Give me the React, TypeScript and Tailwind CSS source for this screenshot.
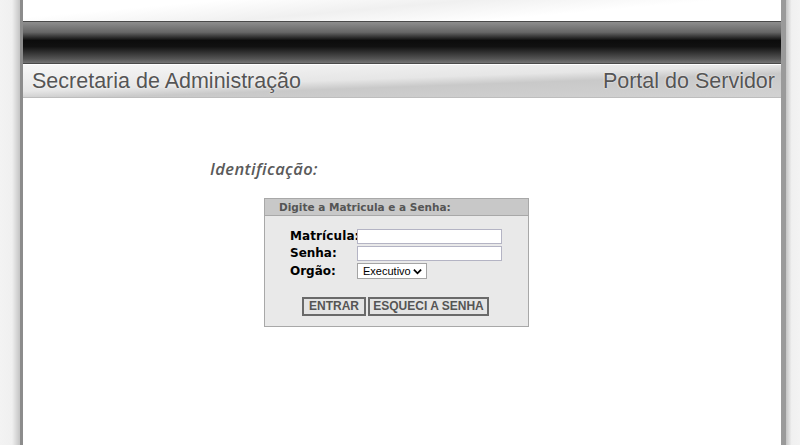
import React from 'react';

const App = () => {
  return (
    <div className="flex h-[445px] w-[800px] overflow-hidden bg-white font-['Liberation_Sans',Arial,sans-serif]">
      {/* left gutter */}
      <div className="w-[20px] shrink-0 bg-[linear-gradient(to_right,#f3f3f3_0%,#f0f0f0_60%,#c4c4c4_100%)]" />
      <div className="w-[3px] shrink-0 bg-[#8c8c8c]" />

      <main className="flex flex-1 flex-col">
        {/* top strip */}
        <div className="h-[21px] bg-[linear-gradient(175deg,#ffffff_20%,#f0f0f0_45%,#ffffff_70%)]" />
        {/* black band */}
        <div className="h-[43px] border-t border-b border-[#4a4a4a] bg-[linear-gradient(to_bottom,#8e8e8e_0%,#666_25%,#0c0c0c_45%,#111_60%,#555_90%,#747474_100%)]" />
        <div className="h-px bg-white" />
        {/* sub header */}
        <div className="flex h-[33px] items-center justify-between border-b border-[#bdbdbd] bg-[linear-gradient(178deg,#f7f7f7_0%,#e6e6e6_45%,#c9c9c9_60%,#d2d2d2_100%)] pl-[9px] pr-[6px]">
          <span className="text-[21.5px] text-[#555] [text-shadow:0_0_2px_#fff]">Secretaria de Administração</span>
          <span className="text-[21.5px] text-[#555] [text-shadow:0_0_2px_#fff]">Portal do Servidor</span>
        </div>

        {/* content */}
        <div className="flex flex-col pl-[187px] pt-[61px]">
          <h1 className="font-['Open_Sans',sans-serif] text-[16.5px] font-semibold italic leading-[20px] tracking-[0.4px] text-[#5a5a5a]">
            Identificação:
          </h1>

          <div className="ml-[54px] mt-[19px] w-[265px] border border-[#a8a8a8] bg-[#e9e9e9]">
            <div className="h-[17px] border-b border-[#a8a8a8] bg-[#c8c8c8] pl-[14px] font-['DejaVu_Sans',Verdana,sans-serif] text-[10.5px] font-bold leading-[16px] text-[#555]">
              Digite a Matricula e a Senha:
            </div>

            <div className="pl-[25px] pt-[13px]">
              <div className="grid grid-cols-[67px_auto] items-center gap-y-[2px] whitespace-nowrap font-['DejaVu_Sans',Verdana,sans-serif] text-[12px] font-bold leading-[15px] text-black">
                <label className="tracking-[0.1px]">Matrícula:</label>
                <input className="h-[15px] w-[145px] border border-[#b4b4c4] bg-white" />
                <label>Senha:</label>
                <input type="password" className="h-[15px] w-[145px] border border-[#b4b4c4] bg-white" />
                <label>Orgão:</label>
                <div className="flex h-[16px] w-[70px] items-center justify-between border border-[#a4a4a4] bg-white pl-[5px] pr-[4px] font-['Liberation_Sans',Arial,sans-serif] text-[11px] font-normal">
                  <span>Executivo</span>
                  <svg width="9" height="7" viewBox="0 0 10 7">
                    <path d="M1 1.5 L5 5.5 L9 1.5" fill="none" stroke="#000" strokeWidth="2" />
                  </svg>
                </div>
              </div>

              <div className="mb-[10px] ml-[12px] mt-[18px] flex gap-[2px]">
                <button className="h-[19px] w-[64px] border-2 border-[#6a6a6a] bg-[#e4e4e4] text-[12px] font-bold leading-[15px] text-[#555]">
                  ENTRAR
                </button>
                <button className="h-[19px] w-[121px] border-2 border-[#6a6a6a] bg-[#e4e4e4] text-[12px] font-bold leading-[15px] text-[#555]">
                  ESQUECI A SENHA
                </button>
              </div>
            </div>
          </div>
        </div>
      </main>

      <div className="w-[5px] shrink-0 bg-[#9a9a9a]" />
      <div className="w-[14px] shrink-0 bg-[linear-gradient(to_right,#c4c4c4_0%,#f0f0f0_40%,#f3f3f3_100%)]" />
    </div>
  );
};

export default App;
